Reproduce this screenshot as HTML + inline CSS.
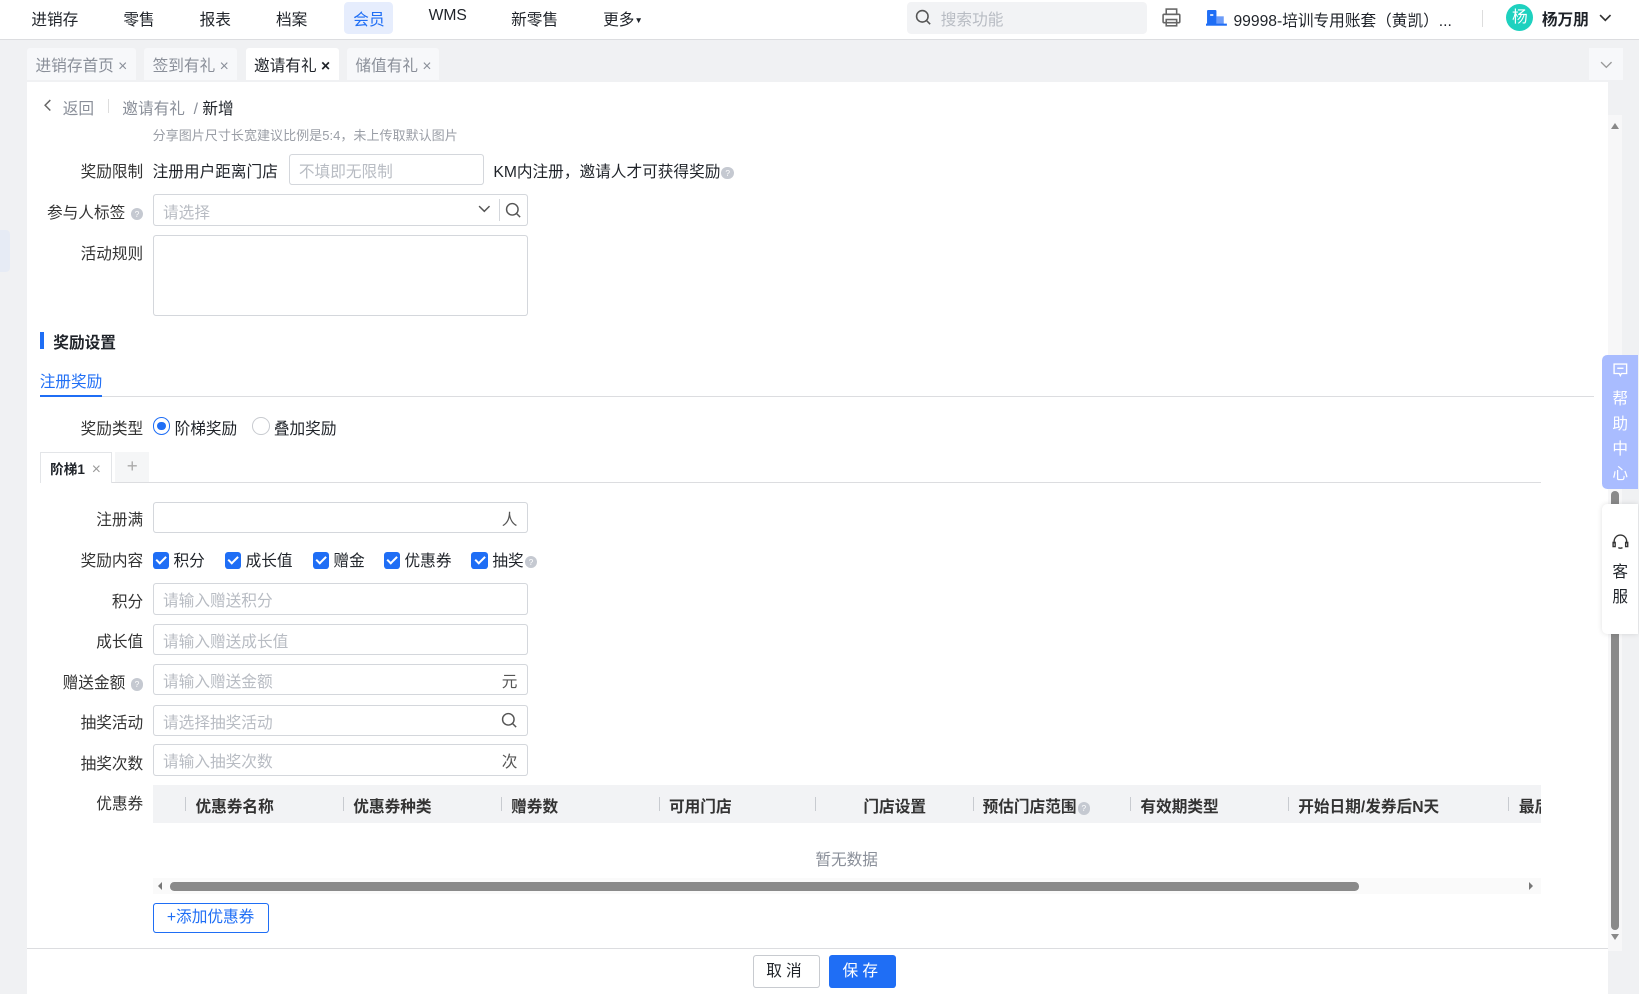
<!DOCTYPE html>
<html><head><meta charset="utf-8"><style>
html{zoom:1.0453}
*{box-sizing:border-box;margin:0;padding:0}
body{width:1568px;height:951px;overflow:hidden;background:#f0f1f3;font-family:"Liberation Sans","Noto Sans CJK SC",sans-serif;color:#1f2329;font-size:15px;position:relative}
.a{position:absolute;white-space:nowrap}
.nav{left:0;top:0;width:1568px;height:38px;background:#fff;border-bottom:1px solid #dcdde0}
.ni{top:7px;font-size:15px}
.tab{top:46px;height:31px;background:#f7f8fa;color:#8a8f99;font-size:15px;padding:5px 8px;border-radius:3px 3px 0 0}
.main{left:26px;top:78px;width:1512px;height:873px;background:#fff}
.lbl{font-size:15px;color:#333;text-align:right;width:120px;left:17px}
.inp{border:1px solid #d4d7dc;border-radius:3px;background:#fff;height:30px;color:#b8bcc3;font-size:15px;padding:4px 9px}
.sfx{right:9px;top:4px;color:#555;position:absolute}
.cb{display:inline-block;width:16px;height:16px;background:#1f6ef5;border-radius:3px;vertical-align:-3px;position:relative;margin-right:4px}
.cb:after{content:"";position:absolute;left:5px;top:2px;width:4px;height:8px;border:solid #fff;border-width:0 2px 2px 0;transform:rotate(45deg)}
.q{display:inline-block;width:12px;height:12px;border-radius:50%;background:#c5c9d1;color:#fff;font-size:8px;text-align:center;line-height:12px;vertical-align:1px;margin-left:1px}
.th{top:760px;font-size:15px;font-weight:bold;color:#333}
.sep{top:762px;width:1px;height:14px;background:#c8cbd0}
</style></head><body>
<div class="a nav"></div>
<div class="a ni" style="left:30px">进销存</div>
<div class="a ni" style="left:118px">零售</div>
<div class="a ni" style="left:191px">报表</div>
<div class="a ni" style="left:264px">档案</div>
<div class="a" style="left:329px;top:2px;width:47px;height:31px;background:#e6edfd;border-radius:4px"></div>
<div class="a ni" style="left:338px;color:#1f6ef5">会员</div>
<div class="a ni" style="left:410px">WMS</div>
<div class="a ni" style="left:489px">新零售</div>
<div class="a ni" style="left:577px">更多<span style="font-size:8px;vertical-align:2px">▼</span></div>
<div class="a" style="left:868px;top:2px;width:229px;height:31px;background:#f2f3f5;border-radius:4px"></div>
<svg class="a" style="left:875px;top:9px" width="16" height="16" viewBox="0 0 16 16"><circle cx="7" cy="7" r="5.5" fill="none" stroke="#555" stroke-width="1.5"/><path d="M11 11l3.5 3.5" stroke="#555" stroke-width="1.5"/></svg>
<div class="a" style="left:900px;top:7px;color:#b8bcc3;font-size:15px">搜索功能</div>
<svg class="a" style="left:1111px;top:7px" width="20" height="20" viewBox="0 0 20 20" fill="none" stroke="#666" stroke-width="1.5"><rect x="5" y="2" width="10" height="5"/><rect x="2" y="7" width="16" height="8" rx="1"/><rect x="5" y="12" width="10" height="6"/></svg>
<svg class="a" style="left:1154px;top:9px" width="20" height="17" viewBox="0 0 20 17"><rect x="1" y="1" width="9" height="14" rx="1" fill="#1f6ef5"/><rect x="10" y="7" width="7" height="8" fill="#6d9cf8"/><rect x="0" y="14" width="20" height="2" fill="#1f6ef5"/><rect x="4" y="5" width="3" height="1.5" fill="#fff"/></svg>
<div class="a" style="left:1180px;top:8px;font-size:15px">99998-培训专用账套（黄凯）...</div>
<div class="a" style="left:1418px;top:10px;width:1px;height:16px;background:#ddd"></div>
<div class="a" style="left:1441px;top:4px;width:26px;height:26px;border-radius:50%;background:#1ed1bf;color:#fff;text-align:center;line-height:26px;font-size:15px">杨</div>
<div class="a" style="left:1475px;top:7px;font-size:15px;font-weight:bold">杨万朋</div>
<svg class="a" style="left:1529px;top:12px" width="14" height="10"><path d="M2 2l5 5 5-5" fill="none" stroke="#333" stroke-width="1.6"/></svg>

<div class="a tab" style="left:26px;width:104px">进销存首页 ×</div>
<div class="a tab" style="left:138px;width:89px">签到有礼 ×</div>
<div class="a tab" style="left:235px;width:89px;background:#fff;color:#1f2329">邀请有礼 <b>×</b></div>
<div class="a tab" style="left:332px;width:88px">储值有礼 ×</div>
<div class="a" style="left:1520px;top:46px;width:33px;height:31px;background:#f7f8fa"></div>
<svg class="a" style="left:1530px;top:57px" width="14" height="10"><path d="M2 2l5 5 5-5" fill="none" stroke="#999" stroke-width="1.3"/></svg>
<div class="a" style="left:0;top:220px;width:10px;height:40px;background:#e6ebf5;border-radius:0 4px 4px 0"></div>

<div class="a main"></div>
<svg class="a" style="left:41px;top:95px" width="10" height="12"><path d="M7 1L2 6l5 5" fill="none" stroke="#666" stroke-width="1.4"/></svg>
<div class="a" style="left:60px;top:92px;color:#8a8f99">返回</div>
<div class="a" style="left:103px;top:95px;width:1px;height:13px;background:#ddd"></div>
<div class="a" style="left:117px;top:92px;color:#8a8f99">邀请有礼 &nbsp;/ <span style="color:#1f2329">新增</span></div>
<div class="a" style="left:146px;top:120px;font-size:12.5px;color:#9a9ea6">分享图片尺寸长宽建议比例是5:4，未上传取默认图片</div>

<div class="a lbl" style="top:152px">奖励限制</div>
<div class="a" style="left:146px;top:152px">注册用户距离门店</div>
<div class="a inp" style="left:276px;top:147px;width:187px">不填即无限制</div>
<div class="a" style="left:472px;top:152px">KM内注册，邀请人才可获得奖励<span class="q">?</span></div>

<div class="a lbl" style="top:191px">参与人标签 <span class="q">?</span></div>
<div class="a inp" style="left:146px;top:186px;width:359px">请选择</div>
<svg class="a" style="left:456px;top:195px" width="14" height="10"><path d="M2 2l5 5 5-5" fill="none" stroke="#555" stroke-width="1.4"/></svg>
<div class="a" style="left:477px;top:190px;width:1px;height:21px;background:#d4d7dc"></div>
<svg class="a" style="left:483px;top:193px" width="16" height="16" viewBox="0 0 16 16"><circle cx="7" cy="7" r="5.5" fill="none" stroke="#555" stroke-width="1.4"/><path d="M11 11l3.5 3.5" stroke="#555" stroke-width="1.4"/></svg>

<div class="a lbl" style="top:231px">活动规则</div>
<div class="a inp" style="left:146px;top:225px;width:359px;height:77px"></div>

<div class="a" style="left:38px;top:318px;width:4px;height:16px;background:#1f6ef5"></div>
<div class="a" style="left:51px;top:316px;font-weight:bold">奖励设置</div>
<div class="a" style="left:38px;top:353px;color:#1f6ef5;font-size:15px">注册奖励</div>
<div class="a" style="left:38px;top:379px;width:1487px;height:1px;background:#dcdde0"></div>
<div class="a" style="left:38px;top:378px;width:60px;height:2px;background:#1f6ef5"></div>

<div class="a lbl" style="top:398px">奖励类型</div>
<div class="a" style="left:146px;top:399px;width:17px;height:17px;border:1.5px solid #1f6ef5;border-radius:50%"></div>
<div class="a" style="left:150.5px;top:403.5px;width:8px;height:8px;background:#1f6ef5;border-radius:50%"></div>
<div class="a" style="left:167px;top:398px">阶梯奖励</div>
<div class="a" style="left:241px;top:399px;width:17px;height:17px;border:1px solid #c8cbd0;border-radius:50%"></div>
<div class="a" style="left:262px;top:398px">叠加奖励</div>

<div class="a" style="left:38px;top:461px;width:1436px;height:1px;background:#dcdde0"></div>
<div class="a" style="left:38px;top:432px;width:69px;height:30px;background:#fff;border:1px solid #e3e5e8;border-bottom:none"></div>
<div class="a" style="left:48px;top:438px;font-size:13px;font-weight:bold">阶梯1 <span style="font-weight:normal;color:#999;margin-left:3px;font-size:15px">×</span></div>
<div class="a" style="left:110px;top:432px;width:33px;height:29px;background:#f5f6f7;color:#aaa;text-align:center;font-size:18px;line-height:27px">+</div>

<div class="a lbl" style="top:485px">注册满</div>
<div class="a inp" style="left:146px;top:480px;width:359px"><span class="sfx">人</span></div>
<div class="a lbl" style="top:524px">奖励内容</div>
<div class="a" style="left:146px;top:524px"><span class="cb"></span>积分</div>
<div class="a" style="left:215px;top:524px"><span class="cb"></span>成长值</div>
<div class="a" style="left:299px;top:524px"><span class="cb"></span>赠金</div>
<div class="a" style="left:367px;top:524px"><span class="cb"></span>优惠券</div>
<div class="a" style="left:451px;top:524px"><span class="cb"></span>抽奖<span class="q">?</span></div>

<div class="a lbl" style="top:563px">积分</div>
<div class="a inp" style="left:146px;top:558px;width:359px">请输入赠送积分</div>
<div class="a lbl" style="top:602px">成长值</div>
<div class="a inp" style="left:146px;top:597px;width:359px">请输入赠送成长值</div>
<div class="a lbl" style="top:641px">赠送金额 <span class="q">?</span></div>
<div class="a inp" style="left:146px;top:635px;width:359px">请输入赠送金额<span class="sfx">元</span></div>
<div class="a lbl" style="top:679px">抽奖活动</div>
<div class="a inp" style="left:146px;top:674px;width:359px">请选择抽奖活动<svg class="sfx" style="top:6px" width="16" height="16" viewBox="0 0 16 16"><circle cx="7" cy="7" r="5.5" fill="none" stroke="#555" stroke-width="1.4"/><path d="M11 11l3.5 3.5" stroke="#555" stroke-width="1.4"/></svg></div>
<div class="a lbl" style="top:718px">抽奖次数</div>
<div class="a inp" style="left:146px;top:712px;width:359px">请输入抽奖次数<span class="sfx">次</span></div>

<div class="a lbl" style="top:757px">优惠券</div>
<div class="a" style="left:146px;top:751px;width:1328px;height:36px;background:#f2f3f5"></div>
<div class="a sep" style="left:177px"></div><div class="a th" style="left:187px">优惠券名称</div>
<div class="a sep" style="left:328px"></div><div class="a th" style="left:338px">优惠券种类</div>
<div class="a sep" style="left:479px"></div><div class="a th" style="left:489px">赠券数</div>
<div class="a sep" style="left:630px"></div><div class="a th" style="left:640px">可用门店</div>
<div class="a sep" style="left:780px"></div><div class="a th" style="left:826px">门店设置</div>
<div class="a sep" style="left:931px"></div><div class="a th" style="left:940px">预估门店范围<span class="q" style="font-weight:normal">?</span></div>
<div class="a sep" style="left:1081px"></div><div class="a th" style="left:1091px">有效期类型</div>
<div class="a sep" style="left:1232px"></div><div class="a th" style="left:1242px">开始日期/发券后N天</div>
<div class="a sep" style="left:1443px"></div><div class="a th" style="left:1453px;width:21px;overflow:hidden">最后</div>
<div class="a" style="left:780px;top:810px;color:#8a8f99">暂无数据</div>
<div class="a" style="left:146px;top:840px;width:1328px;height:15px;background:#fafafa"></div>
<div class="a" style="left:163px;top:844px;width:1137px;height:8px;background:#8a8a8a;border-radius:4px"></div>
<div class="a" style="left:151px;top:844px;width:0;height:0;border:4px solid transparent;border-right-color:#777;border-left:none"></div>
<div class="a" style="left:1463px;top:844px;width:0;height:0;border:4px solid transparent;border-left-color:#777;border-right:none"></div>
<div class="a" style="left:146px;top:864px;width:111px;height:29px;border:1px solid #1f6ef5;border-radius:3px;color:#1f6ef5;text-align:center;line-height:27px">+添加优惠券</div>

<div class="a" style="left:26px;top:907px;width:1512px;height:1px;background:#dcdde0"></div>
<div class="a" style="left:720px;top:914px;width:64px;height:31px;border:1px solid #c8cbd0;border-radius:3px;text-align:center;line-height:31px;font-size:15px;letter-spacing:4px">取消</div>
<div class="a" style="left:793px;top:914px;width:64px;height:31px;background:#1f6ef5;border-radius:3px;text-align:center;line-height:33px;font-size:15px;color:#fff;letter-spacing:4px">保存</div>

<div class="a" style="left:1538px;top:110px;width:14px;height:800px;background:#f7f7f8"></div>
<div class="a" style="left:1541px;top:118px;border:4px solid transparent;border-bottom:6px solid #888;border-top:none"></div>
<div class="a" style="left:1541px;top:470px;width:8px;height:420px;background:#8a8a8a;border-radius:4px"></div>
<div class="a" style="left:1541px;top:894px;border:4px solid transparent;border-top:6px solid #888;border-bottom:none"></div>

<div class="a" style="left:1533px;top:340px;width:34px;height:128px;background:#a9bcff;border-radius:5px 0 0 5px;color:#fff;text-align:center;font-size:15px;line-height:24px;padding-top:6px">
<svg width="16" height="16" viewBox="0 0 16 16" fill="none" stroke="#fff" stroke-width="1.3"><path d="M2 2h12v9H9l-1 2-1-2H2z"/><path d="M5 6h6"/></svg><br>帮<br>助<br>中<br>心</div>
<div class="a" style="left:1533px;top:482px;width:34px;height:125px;background:#fff;border-radius:5px 0 0 5px;box-shadow:0 0 5px rgba(0,0,0,.12);text-align:center;font-size:15px;line-height:24px;padding-top:28px">
<svg width="18" height="18" viewBox="0 0 18 18" fill="none" stroke="#333" stroke-width="1.3"><path d="M3 10V8a6 6 0 0112 0v2"/><rect x="2" y="9" width="2" height="4"/><rect x="14" y="9" width="2" height="4"/><path d="M7 14q2 1 4 0"/></svg><br>客<br>服</div>
</body></html>
